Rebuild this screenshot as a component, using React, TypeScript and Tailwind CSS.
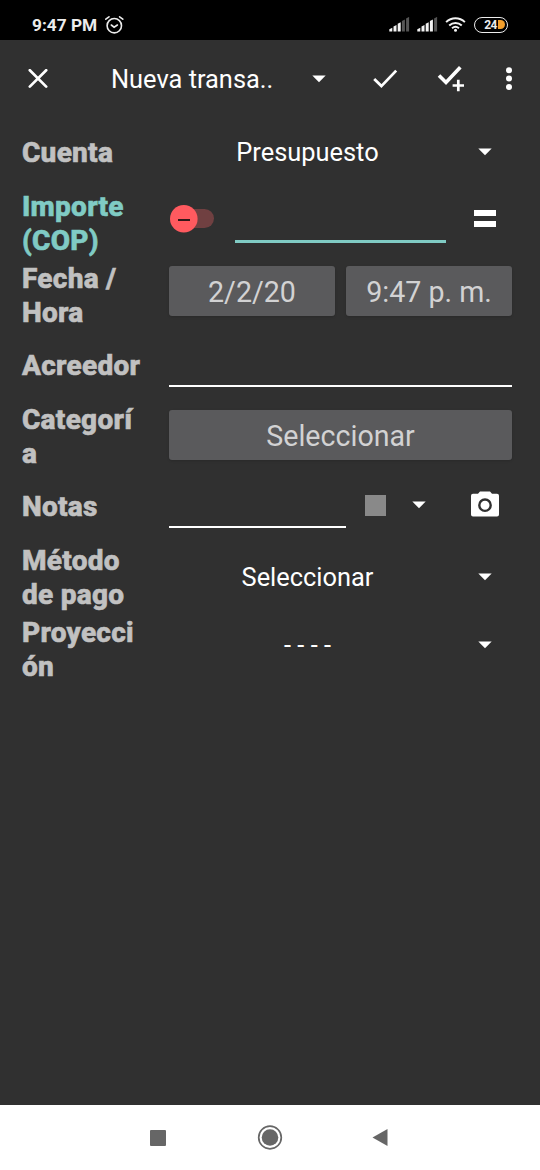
import type { ReactNode } from "react";

function Caret() {
  return (
    <svg width="14" height="8" viewBox="0 0 14 8" fill="#fff" className="shrink-0">
      <path d="M0.3 0.4h13.4L7 7.2z" />
    </svg>
  );
}

function Signal({ lit }: { lit: number }) {
  return (
    <svg width="21" height="15" viewBox="0 0 21 15" className="shrink-0">
      {[0, 1, 2, 3, 4].map((i) => (
        <path
          key={i}
          d={`M${i * 4.2 + 0.3} ${12.2 - i * 2.7}l3-1.5V14.5h-3z`}
          fill={i < lit ? "#f2f2f2" : "#555"}
        />
      ))}
    </svg>
  );
}

function StatusBar() {
  return (
    <header className="flex h-10 shrink-0 items-center bg-black pt-[9px] pr-8 pl-8 text-[#ececec]">
      <span className="w-[72px] text-[17.3px] leading-8 font-bold whitespace-nowrap">9:47 PM</span>
      <svg width="20" height="20" viewBox="0 0 20 20" fill="none" stroke="#ececec" strokeWidth="1.6" strokeLinecap="round">
        <circle cx="10.3" cy="10.7" r="7.2" />
        <path d="M1.8 4.2L5 1.8M18.8 4.2L15.6 1.8M7.3 10l2.8 2.2 3.3-2.2" />
      </svg>
      <div className="ml-auto flex items-center">
        <Signal lit={3} />
        <span className="w-[7px]" />
        <Signal lit={4} />
        <svg width="21" height="15" viewBox="0 0 22 16" fill="none" stroke="#f2f2f2" strokeWidth="2.1" className="mr-px ml-[7px]">
          <path d="M1 5.5C6.7 0 15.3 0 21 5.5M4.3 9c3.9-3.6 9.5-3.6 13.4 0M7.3 12c2.2-1.9 5.2-1.9 7.4 0" />
          <circle cx="11" cy="14" r="1.6" fill="#f2f2f2" stroke="none" />
        </svg>
        <div className="ml-[7px] flex h-4 w-[34px] items-center justify-end rounded-full border-[1.5px] border-[#ececec]">
          <span className="text-[12px] leading-3 font-bold tracking-[-0.5px]">24</span>
          <span className="mr-[2px] ml-px h-[9px] w-[7px] rounded-r-full bg-[#f5a02c]" />
        </div>
      </div>
    </header>
  );
}

function Toolbar() {
  return (
    <div className="flex h-[77px] shrink-0 items-center pl-7">
      <svg width="20" height="20" viewBox="0 0 20 20" stroke="#fff" strokeWidth="2.7" strokeLinecap="round">
        <path d="M1.8 1.2l16.4 16.4M18.2 1.2L1.8 17.6" />
      </svg>
      <span className="ml-[63px] w-[201px] pt-[2px] text-[25.4px] whitespace-nowrap">Nueva transa..</span>
      <Caret />
      <svg width="26" height="20" viewBox="0 0 26 20" fill="none" stroke="#fff" strokeWidth="2.8" className="ml-[46px]">
        <path d="M2.2 10l7.2 7.1L24.2 1.6" />
      </svg>
      <svg width="28" height="27" viewBox="0 0 28 27" fill="none" stroke="#fff" className="ml-[39px]">
        <path d="M2 10.5l7 7L23.3 2.3" strokeWidth="3.6" />
        <path d="M21.3 14.8v11.4M15.6 20.5H27" strokeWidth="2.7" />
      </svg>
      <svg width="8" height="24" viewBox="0 0 8 24" fill="#fff" className="ml-[40px]">
        <circle cx="4" cy="3.3" r="3" />
        <circle cx="4" cy="11.6" r="3" />
        <circle cx="4" cy="19.9" r="3" />
      </svg>
    </div>
  );
}

function Row({
  lines,
  height,
  active,
  labelPad = "pt-px",
  children,
}: {
  lines: string[];
  height: string;
  active?: boolean;
  labelPad?: string;
  children: ReactNode;
}) {
  return (
    <div className={`flex items-center pr-7 pl-[22px] ${height}`}>
      <div
        className={`w-[147px] shrink-0 text-[28px] leading-[33.5px] font-extrabold tracking-[0.27px] whitespace-nowrap [-webkit-text-stroke:0.6px_currentColor] ${labelPad} ${active ? "text-[#80cbc4]" : "text-[#c1c1c1]"}`}
      >
        {lines.map((line) => (
          <div key={line}>{line}</div>
        ))}
      </div>
      <div className="flex h-full flex-1 items-center">{children}</div>
    </div>
  );
}

function Spinner({ text }: { text: string }) {
  return (
    <>
      <span className="w-[277px] pt-px text-center text-[25.4px]">{text}</span>
      <span className="ml-8">
        <Caret />
      </span>
    </>
  );
}

function GrayButton({ children }: { children: ReactNode }) {
  return (
    <button className="flex h-[50px] flex-1 items-center justify-center rounded-[3px] bg-[#5a5a5c] pt-[3px] text-[28.6px] whitespace-nowrap text-[#d2d2d3] shadow">
      {children}
    </button>
  );
}

export default function App() {
  return (
    <div className="flex h-[1170px] w-[540px] flex-col overflow-hidden bg-[#303030] font-['Roboto',sans-serif] text-white">
      <StatusBar />
      <Toolbar />
      <main className="flex-1">
        <Row lines={["Cuenta"]} height="h-[70px]">
          <Spinner text="Presupuesto" />
        </Row>
        <Row lines={["Importe", "(COP)"]} height="h-[72px]" active>
          <div className="-mt-2 flex w-[66px] items-center">
            <svg width="46" height="30" viewBox="0 0 46 30">
              <rect x="6" y="5" width="39" height="19" rx="9.5" fill="#704041" />
              <circle cx="14.8" cy="14.8" r="13.8" fill="#ff5a5f" />
              <path d="M9 16h12" stroke="#301818" strokeWidth="2" />
            </svg>
          </div>
          <div className="h-[3px] w-[211px] translate-y-[18px] bg-[#80cbc4]" />
          <div className="-mt-[9px] ml-7 h-[17px] w-[22px] border-y-[6px] border-white" />
        </Row>
        <Row lines={["Fecha /", "Hora"]} height="h-[72px]">
          <div className="flex flex-1 gap-[11px] pb-2">
            <GrayButton>2/2/20</GrayButton>
            <GrayButton>9:47 p. m.</GrayButton>
          </div>
        </Row>
        <Row lines={["Acreedor"]} height="h-[70px]" labelPad="pb-px">
          <div className="mb-3.5 flex-1 self-end border-b-2 border-white" />
        </Row>
        <Row lines={["Categorí", "a"]} height="h-[72px]" labelPad="pb-px">
          <div className="flex flex-1 pb-1">
            <GrayButton>Seleccionar</GrayButton>
          </div>
        </Row>
        <Row lines={["Notas"]} height="h-[70px]" labelPad="pb-[3px]">
          <div className="mb-[15px] w-[177px] self-end border-b-2 border-white" />
          <div className="mr-[26px] mb-1.5 ml-[19px] h-[21px] w-[21px] bg-[#898989]" />
          <span className="mb-1.5">
            <Caret />
          </span>
          <svg width="28" height="26" viewBox="0 0 28 26" className="mb-2 ml-[45px]">
            <path d="M9 0.6h10l2 2.1h5a2 2 0 0 1 2 2v18.7a2 2 0 0 1-2 2H2a2 2 0 0 1-2-2V4.7a2 2 0 0 1 2-2h5z" fill="#fff" />
            <circle cx="14" cy="14.2" r="5.7" fill="#fff" stroke="#303030" strokeWidth="2.4" />
          </svg>
        </Row>
        <Row lines={["Método", "de pago"]} height="h-[68px]">
          <Spinner text="Seleccionar" />
        </Row>
        <Row lines={["Proyecci", "ón"]} height="h-[76px]">
          <div className="flex h-full flex-1 items-center pb-[8px]">
            <Spinner text="- - - -" />
          </div>
        </Row>
      </main>
      <nav className="flex h-[65px] shrink-0 items-center bg-white pl-[150px]">
        <span className="h-4 w-4 rounded-[1px] bg-[#666]" />
        <svg width="26" height="26" viewBox="0 0 26 26" className="ml-[91px]">
          <circle cx="13" cy="12.5" r="11.3" fill="none" stroke="#666" strokeWidth="1.7" />
          <circle cx="13" cy="12.5" r="8.3" fill="#666" />
        </svg>
        <svg width="16" height="18" viewBox="0 0 16 18" className="ml-[89px]">
          <path d="M0.5 8.500L15.500 0v17z" fill="#666" />
        </svg>
      </nav>
    </div>
  );
}
